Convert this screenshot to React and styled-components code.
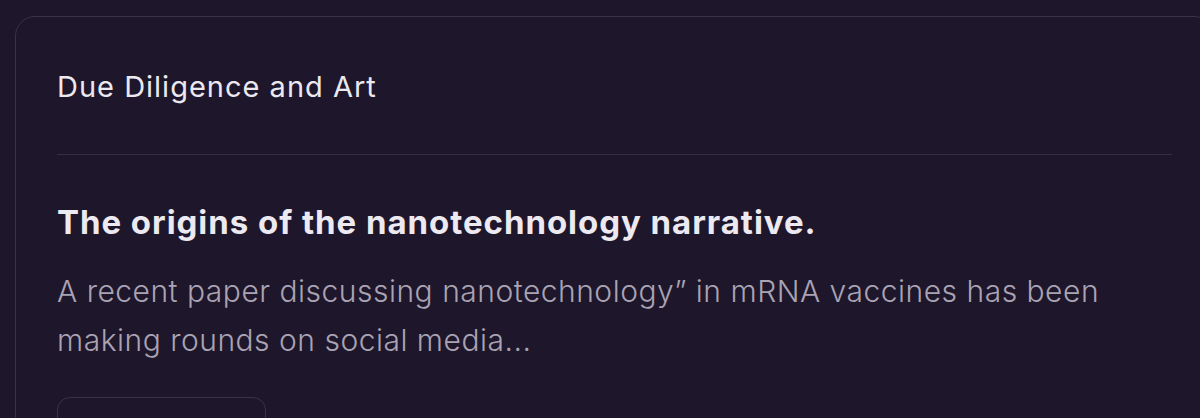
import React from "react";
import styled, { createGlobalStyle } from "styled-components";

const Global = createGlobalStyle`
  html, body {
    margin: 0;
    padding: 0;
    background: #1e162b;
    overflow: hidden;
  }
  body {
    font-family: Inter, "Noto Sans", "Liberation Sans", sans-serif;
    -webkit-font-smoothing: antialiased;
  }
`;

const Page = styled.div`
  padding: 16px 0 0 15px;
  width: 1200px;
  height: 418px;
  box-sizing: border-box;
  overflow: hidden;
`;

const Card = styled.article`
  width: 1199px;
  box-sizing: border-box;
  border: 1.5px solid #3a3247;
  border-radius: 20px;
  padding: 0 41px 40px 41px;
  background: #1e162b;
`;

const Header = styled.header`
  padding: 49px 0 46px;
  border-bottom: 1.5px solid #352d42;
`;

const Section = styled.h3`
  margin: 0;
  font-size: 29px;
  line-height: 42px;
  font-weight: 400;
  color: #ebe8f0;
  letter-spacing: 1px;
`;

const Body = styled.div`
  padding-top: 46px;
  display: flex;
  flex-direction: column;
  align-items: flex-start;
`;

const Headline = styled.h2`
  margin: 0;
  font-size: 33px;
  line-height: 42px;
  font-weight: 700;
  color: #ece9f1;
  letter-spacing: 0.95px;
`;

const Excerpt = styled.p`
  margin: 24px 0 0;
  font-size: 30px;
  line-height: 49px;
  font-weight: 300;
  color: #a9a3b3;
  letter-spacing: 0.5px;
`;

const ReadButton = styled.button`
  margin-top: 32px;
  width: 209px;
  height: 76px;
  border: 1.5px solid #3a3247;
  border-radius: 13px;
  background: transparent;
  color: #ebe8f0;
  font: inherit;
  font-size: 24px;
`;

export default function App() {
  return (
    <>
      <Global />
      <Page>
        <Card>
          <Header>
            <Section>Due Diligence and Art</Section>
          </Header>
          <Body>
            <Headline>The origins of the nanotechnology narrative.</Headline>
            <Excerpt>
              A recent paper discussing nanotechnology” in mRNA vaccines has been
              making rounds on social media...
            </Excerpt>
            <ReadButton>Read more</ReadButton>
          </Body>
        </Card>
      </Page>
    </>
  );
}
